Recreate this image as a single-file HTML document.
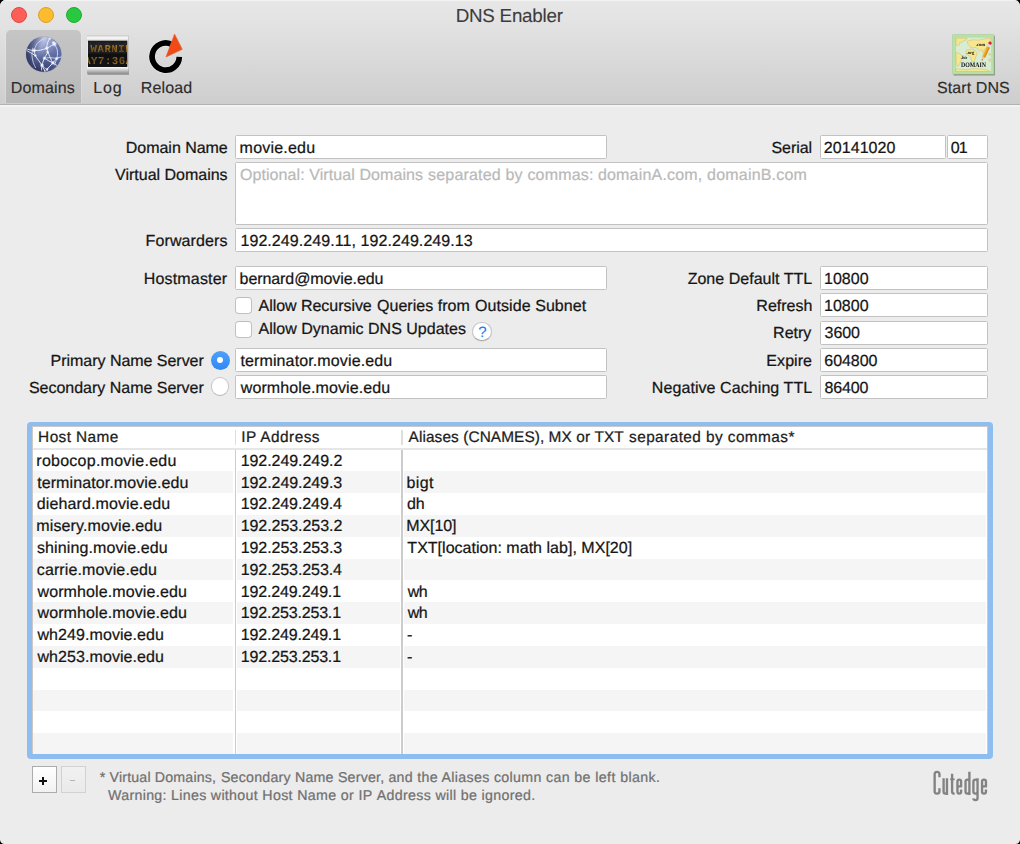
<!DOCTYPE html>
<html><head><meta charset="utf-8"><title>DNS Enabler</title>
<style>
html,body{margin:0;padding:0;}
body{width:1020px;height:844px;background:#000;overflow:hidden;font-family:"Liberation Sans",sans-serif;text-rendering:geometricPrecision;}
#win{position:absolute;left:0;top:0;width:1020px;height:844px;background:#ececec;border-radius:6px 6px 4.5px 4.5px;overflow:hidden;}
#tb{position:absolute;left:0;top:0;width:1020px;height:104px;background:linear-gradient(#e8e7e8 0px,#e4e3e4 22px,#cfcecf 104px);border-bottom:1px solid #b3b2b3;box-shadow:inset 0 1px 0 #f4f3f4, 0 2px 0 #f3f3f3;}
.t{position:absolute;white-space:pre;line-height:20px;height:20px;-webkit-text-stroke:0.24px;}
.abs{position:absolute;}
.inp{position:absolute;background:#fff;border:1px solid #c2c2c2;box-sizing:border-box;border-radius:1.5px;}
.tl{position:absolute;width:16px;height:16px;border-radius:50%;box-sizing:border-box;}
.cb{position:absolute;width:17px;height:17px;box-sizing:border-box;border:1px solid #c1c1c1;border-top-color:#bcbcbc;border-radius:4px;background:#fff;}
.stripe{position:absolute;background:#f5f5f5;height:21.8px;}
</style></head><body><div id="win">
<div id="tb"></div>

<div class="tl" style="left:10.8px;top:6.7px;width:16.4px;height:16.4px;background:#fc5f57;border:1px solid #e2463f;"></div>
<div class="tl" style="left:38.1px;top:6.7px;width:16.4px;height:16.4px;background:#fdbc2e;border:1px solid #dfa023;"></div>
<div class="tl" style="left:65.5px;top:6.7px;width:16.4px;height:16.4px;background:#28c840;border:1px solid #1dad2b;"></div>
<span class="t" style="left:455.65px;top:6.00px;font-size:18.8px;color:#3c3c3c;letter-spacing:-0.231px;-webkit-text-stroke:0.12px;">DNS Enabler</span>
<div class="abs" style="left:5.5px;top:29.5px;width:75px;height:73px;border-radius:5px 5px 0 0;background:linear-gradient(#c6c5c6,#b9b8b9);box-shadow:-1px 0 0 rgba(255,255,255,.18),1px 0 0 rgba(255,255,255,.18);"></div>
<span class="t" style="left:10.87px;top:79.00px;font-size:16px;color:#2b2b2b;letter-spacing:0.112px;-webkit-text-stroke:0.15px;">Domains</span>
<span class="t" style="left:93.37px;top:79.00px;font-size:16px;color:#2b2b2b;letter-spacing:0.775px;-webkit-text-stroke:0.15px;">Log</span>
<span class="t" style="left:140.87px;top:79.00px;font-size:16px;color:#2b2b2b;letter-spacing:0.094px;-webkit-text-stroke:0.15px;">Reload</span>
<span class="t" style="left:937.03px;top:79.00px;font-size:16px;color:#2b2b2b;letter-spacing:0.083px;-webkit-text-stroke:0.15px;">Start DNS</span>
<svg class="abs" style="left:20px;top:30px;" width="50" height="50" viewBox="0 0 50 50">
<defs>
<radialGradient id="gb" cx="0.52" cy="0.12" r="1.0" fx="0.52" fy="0.04">
<stop offset="0" stop-color="#c6ceec"/><stop offset="0.25" stop-color="#99a5d2"/><stop offset="0.5" stop-color="#6675a6"/><stop offset="0.75" stop-color="#3d4875"/><stop offset="1" stop-color="#232a52"/>
</radialGradient>
<linearGradient id="gb2" x1="0" y1="0.2" x2="1" y2="0.6"><stop offset="0" stop-color="#171c3e" stop-opacity="0.62"/><stop offset="0.4" stop-color="#1d2347" stop-opacity="0"/><stop offset="1" stop-color="#6f86d2" stop-opacity="0.45"/></linearGradient>
<radialGradient id="nd"><stop offset="0" stop-color="#fff" stop-opacity="1"/><stop offset="0.3" stop-color="#f2f5ff" stop-opacity="0.9"/><stop offset="1" stop-color="#cfd8ff" stop-opacity="0"/></radialGradient>
<clipPath id="gc"><circle cx="23.67" cy="24.25" r="17.45"/></clipPath>
<filter id="gbl" x="-10%" y="-10%" width="120%" height="120%"><feGaussianBlur stdDeviation="0.42"/></filter>
<filter id="gbs" x="-10%" y="-10%" width="120%" height="120%"><feGaussianBlur stdDeviation="0.5"/></filter>
</defs>
<circle cx="23.67" cy="24.4" r="18.1" fill="#85858f" opacity="0.4" filter="url(#gbs)"/>
<circle cx="23.67" cy="24.25" r="17.6" fill="url(#gb)"/>
<circle cx="23.67" cy="24.25" r="17.6" fill="url(#gb2)"/>
<g clip-path="url(#gc)" fill="none" stroke="#f6f8ff" stroke-width="1.0" stroke-linecap="round" opacity="0.9" filter="url(#gbl)">
<path d="M5.90,18.45 C6.53,18.69 8.30,19.54 9.69,19.88 C11.07,20.22 12.37,20.45 14.19,20.49 C16.01,20.53 18.49,20.49 20.59,20.11 C22.68,19.73 24.93,18.97 26.75,18.22 C28.57,17.47 30.22,16.31 31.49,15.61 C32.75,14.92 33.46,14.64 34.33,14.05 C35.20,13.45 36.31,12.39 36.70,12.06"/><path d="M5.66,20.11 C6.33,20.47 8.07,21.34 9.69,22.25 C11.31,23.15 14.43,25.01 15.37,25.56"/><path d="M14.19,20.49 C14.39,21.34 14.62,23.89 15.37,25.56 C16.12,27.24 17.59,28.92 18.69,30.54 C19.80,32.16 21.14,33.86 22.01,35.28 C22.88,36.70 23.35,37.89 23.91,39.07 C24.46,40.26 25.09,41.84 25.33,42.39"/><path d="M29.83,8.03 C29.43,8.90 27.97,11.54 27.46,13.24 C26.95,14.94 26.71,16.76 26.75,18.22 C26.79,19.68 27.82,20.82 27.70,22.01 C27.58,23.19 26.59,24.30 26.04,25.33 C25.48,26.35 24.89,27.06 24.38,28.17 C23.87,29.28 23.35,30.78 22.96,31.96 C22.56,33.15 22.25,33.94 22.01,35.28 C21.77,36.62 21.61,39.23 21.54,40.02"/><path d="M27.70,22.01 C28.13,22.96 29.43,25.88 30.30,27.70 C31.17,29.51 31.76,31.61 32.91,32.91 C34.06,34.21 36.46,35.08 37.18,35.52"/><path d="M41.91,26.75 C41.05,27.05 38.20,27.52 36.70,28.55 C35.20,29.58 34.49,31.16 32.91,32.91 C31.33,34.66 28.64,37.49 27.22,39.07 C25.80,40.65 24.85,41.84 24.38,42.39"/><path d="M24.38,28.17 C25.09,28.61 27.22,29.99 28.64,30.78 C30.07,31.57 32.20,32.55 32.91,32.91"/><path d="M24.38,28.17 C25.41,28.09 28.49,27.63 30.54,27.70 C32.59,27.76 35.67,28.41 36.70,28.55" opacity="0.8"/><path d="M12.77,18.22 C12.63,19.40 11.88,22.96 11.96,25.33 C12.04,27.70 12.63,30.38 13.24,32.44 C13.85,34.49 15.22,36.78 15.61,37.65" opacity="0.75"/><path d="M14.19,20.49 C14.66,19.36 15.57,15.61 17.03,13.72 C18.49,11.82 21.97,9.88 22.96,9.12" opacity="0.7"/><path d="M34.33,14.05 C34.81,14.98 36.66,17.76 37.18,19.64 C37.69,21.52 37.49,23.84 37.41,25.33 C37.33,26.81 37.14,26.97 36.70,28.55 C36.27,30.13 35.12,33.76 34.81,34.81" opacity="0.8"/><path d="M22.01,35.28 C22.96,36.19 26.75,39.82 27.70,40.73" opacity="0.7"/><path d="M14.19,20.49 C15.10,19.72 18.18,17.74 19.64,15.85 C21.10,13.95 22.40,10.24 22.96,9.12" opacity="0.0"/>
</g>
<g clip-path="url(#gc)"><circle cx="14.19" cy="20.49" r="2.6" fill="url(#nd)"/><circle cx="26.75" cy="18.22" r="2.4" fill="url(#nd)"/><circle cx="34.33" cy="14.05" r="3.0" fill="url(#nd)"/><circle cx="29.83" cy="8.27" r="2.0" fill="url(#nd)"/><circle cx="27.70" cy="22.01" r="2.0" fill="url(#nd)"/><circle cx="24.38" cy="28.17" r="2.2" fill="url(#nd)"/><circle cx="22.01" cy="35.28" r="2.6" fill="url(#nd)"/><circle cx="32.91" cy="32.91" r="2.4" fill="url(#nd)"/><circle cx="36.70" cy="28.55" r="2.2" fill="url(#nd)"/><circle cx="15.37" cy="25.56" r="1.8" fill="url(#nd)"/><circle cx="27.22" cy="39.07" r="1.8" fill="url(#nd)"/><circle cx="33.38" cy="12.53" r="2.0" fill="url(#nd)"/></g>
</svg><svg class="abs" style="left:82px;top:30px;" width="50" height="50" viewBox="0 0 50 50">
<defs>
<linearGradient id="lt" x1="0" y1="0" x2="0" y2="1"><stop offset="0" stop-color="#c9c9c9"/><stop offset="0.5" stop-color="#fbfbfb"/><stop offset="1" stop-color="#cfcfcf"/></linearGradient>
<linearGradient id="lb" x1="0" y1="0" x2="0" y2="1"><stop offset="0" stop-color="#ffffff"/><stop offset="0.5" stop-color="#c9c9c9"/><stop offset="1" stop-color="#8e8e8e"/></linearGradient>
<linearGradient id="ls" x1="0" y1="0" x2="0" y2="1"><stop offset="0" stop-color="#101010"/><stop offset="0.08" stop-color="#2a2a2a"/><stop offset="0.47" stop-color="#232323"/><stop offset="0.5" stop-color="#0d0d0d"/><stop offset="1" stop-color="#141414"/></linearGradient>
<clipPath id="lc"><rect x="6" y="10.7" width="39.3" height="26.3"/></clipPath>
<filter id="lbl"><feGaussianBlur stdDeviation="0.3"/></filter>
<filter id="lsh"><feGaussianBlur stdDeviation="0.7"/></filter>
<pattern id="lp" width="1.12" height="1.12" patternUnits="userSpaceOnUse"><path d="M0,0.15 H1.12 M0.15,0 V1.12" stroke="#151515" stroke-width="0.34" fill="none"/></pattern>
</defs>
<rect x="5.6" y="6" width="41.4" height="39" fill="#000" opacity="0.25" filter="url(#lsh)"/>
<rect x="5" y="5" width="41.5" height="6" fill="url(#lt)"/>
<rect x="5" y="36.8" width="41.5" height="6.8" fill="url(#lb)"/>
<rect x="5" y="10.7" width="41.5" height="26.3" fill="#e8e8e8"/>
<rect x="6" y="10.7" width="39.3" height="26.3" fill="url(#ls)"/>
<g clip-path="url(#lc)" font-family="'Liberation Mono',monospace" font-weight="bold" font-size="10.6" fill="#cc8f2b" opacity="0.92" filter="url(#lbl)" letter-spacing="0.55">
<text x="8.6" y="21.9">WARNING</text>
<text x="2.2" y="34.1">AY7:36AM</text>
</g>
<rect x="6" y="12" width="39.3" height="24" fill="url(#lp)" opacity="0.8"/>
</svg><svg class="abs" style="left:140px;top:28px;" width="52" height="52" viewBox="0 0 52 52">
<defs><filter id="rsh" x="-20%" y="-20%" width="140%" height="140%"><feGaussianBlur stdDeviation="0.5"/></filter></defs>
<path d="M39.2,28.9 A13.6,13.6 0 1 1 31.3,16.3" fill="none" stroke="#fff" stroke-width="6.6" opacity="0.55" filter="url(#rsh)"/>
<path d="M39.3,28.9 A13.6,13.6 0 1 1 31.3,16.2" fill="none" stroke="#000" stroke-width="5.7"/>
<path d="M34.8,6.3 L26.1,29.2 L42.6,21.6 Z" fill="#555" opacity="0.5" filter="url(#rsh)"/>
<path d="M34.5,5.9 L25.9,29 L42.2,21.3 Z" fill="#f04a16" stroke="#f36a3c" stroke-width="0.5" stroke-linejoin="round"/>
</svg><svg class="abs" style="left:948px;top:30px;" width="50" height="50" viewBox="0 0 50 50">
<defs><filter id="ssh" x="-20%" y="-20%" width="140%" height="140%"><feGaussianBlur stdDeviation="0.7"/></filter>
<filter id="sbl"><feGaussianBlur stdDeviation="0.3"/></filter>
<linearGradient id="pb" x1="0" y1="0" x2="1" y2="0"><stop offset="0" stop-color="#f7c24a"/><stop offset="0.5" stop-color="#f0a21e"/><stop offset="1" stop-color="#c97c10"/></linearGradient>
</defs>
<rect x="5.6" y="5.8" width="41.2" height="39.6" fill="#000" opacity="0.4" filter="url(#ssh)"/>
<rect x="4.7" y="4.7" width="41.2" height="39.4" fill="#b9e2a6"/>
<rect x="4.7" y="4.7" width="41.2" height="39.4" fill="none" stroke="#a5cf93" stroke-width="0.6"/>
<rect x="7.7" y="7.1" width="36.1" height="34.4" fill="#d7ecd2" stroke="#a9cf9a" stroke-width="0.5"/>
<g fill="#f5e68f" stroke="#c9b866" stroke-width="0.45" stroke-linejoin="round" filter="url(#sbl)"><polygon points="8.0,8.3 19.0,8.3 18.1,10.1 15.1,11.0 13.9,12.7 12.1,11.8 11.3,14.8 8.3,15.5"/><polygon points="19.5,11.0 24.9,9.8 30.8,10.2 35.5,8.9 42.4,8.3 42.8,10.7 40.6,13.6 38.8,17.2 36.4,19.5 35.1,22.8 33.5,19.5 31.5,20.9 29.7,19.5 28.0,17.3 25.6,17.9 22.6,17.3 20.3,14.8 19.5,12.6"/><polygon points="18.4,20.1 23.7,19.1 27.8,20.7 29.1,23.7 27.8,26.7 26.1,32.0 23.8,31.4 22.5,26.8 19.5,24.9 17.8,22.5"/><polygon points="8.2,22.4 11.8,23.6 14.3,26.7 13.2,30.8 10.8,35.5 8.9,36.3 8.2,29.6"/><polygon points="8.2,38.8 17.8,39.8 26.7,38.6 35.5,39.2 41.0,40.4 41.0,41.6 8.2,41.6"/><polygon points="40.9,23.4 42.2,23.7 42.2,25.2 41.0,25.0"/><polygon points="40.9,28.9 42.4,29.1 42.3,31.5 41.0,31.3"/></g>
<g font-family="'Liberation Serif',serif" fill="#111" filter="url(#sbl)">
<text x="13" y="37" font-size="6.9" font-weight="bold" textLength="25" lengthAdjust="spacingAndGlyphs">DOMAIN</text>
<text x="27.8" y="15.6" font-size="4.6" font-weight="bold">.com</text>
<text x="18.6" y="23.6" font-size="4.6" font-weight="bold">.org</text>
<text x="12.8" y="28.9" font-size="4.6" font-weight="bold" font-style="italic">.biz</text>
</g>
<g transform="translate(33.8,30.8) rotate(25)">
<polygon points="0,0 -1.7,-4.2 1.7,-4.2" fill="#e8c9a0"/>
<polygon points="0,0 -0.6,-1.5 0.6,-1.5" fill="#7a3b3b"/>
<rect x="-1.7" y="-15.6" width="3.4" height="11.5" fill="url(#pb)"/>
<rect x="-1.7" y="-18.4" width="3.4" height="2.9" fill="#d9dde6"/>
<rect x="-1.7" y="-21" width="3.4" height="2.8" rx="1.3" fill="#e32038"/>
</g>
</svg>
<div class="inp" style="left:235px;top:134.5px;width:372px;height:24.5px;"></div>
<div class="inp" style="left:820px;top:134.5px;width:126px;height:24.5px;"></div>
<div class="inp" style="left:947px;top:134.5px;width:41px;height:24.5px;"></div>
<div class="inp" style="left:235px;top:162px;width:753px;height:63px;"></div>
<div class="inp" style="left:235px;top:227.5px;width:753px;height:24.5px;"></div>
<div class="inp" style="left:235px;top:265.5px;width:372px;height:24.5px;"></div>
<div class="inp" style="left:820px;top:265.5px;width:168px;height:24.5px;"></div>
<div class="inp" style="left:820px;top:293.2px;width:168px;height:24.30000000000001px;"></div>
<div class="inp" style="left:820px;top:320.5px;width:168px;height:24.5px;"></div>
<div class="inp" style="left:235px;top:347.7px;width:372px;height:24.30000000000001px;"></div>
<div class="inp" style="left:820px;top:347.7px;width:168px;height:24.30000000000001px;"></div>
<div class="inp" style="left:235px;top:375.2px;width:372px;height:24.30000000000001px;"></div>
<div class="inp" style="left:820px;top:375.2px;width:168px;height:24.30000000000001px;"></div>
<span class="t" style="left:125.87px;top:139.00px;font-size:16px;color:#151515;letter-spacing:-0.042px;">Domain Name</span>
<span class="t" style="left:115.07px;top:166.00px;font-size:16px;color:#151515;letter-spacing:-0.007px;">Virtual Domains</span>
<span class="t" style="left:145.62px;top:232.00px;font-size:16px;color:#151515;letter-spacing:0.101px;">Forwarders</span>
<span class="t" style="left:143.87px;top:270.00px;font-size:16px;color:#151515;letter-spacing:0.153px;">Hostmaster</span>
<span class="t" style="left:50.62px;top:352.00px;font-size:16px;color:#151515;letter-spacing:-0.034px;">Primary Name Server</span>
<span class="t" style="left:28.93px;top:379.00px;font-size:16px;color:#151515;letter-spacing:-0.015px;">Secondary Name Server</span>
<span class="t" style="left:771.43px;top:139.00px;font-size:16px;color:#151515;letter-spacing:-0.034px;">Serial</span>
<span class="t" style="left:687.67px;top:270.00px;font-size:16px;color:#151515;letter-spacing:0.020px;">Zone Default TTL</span>
<span class="t" style="left:756.37px;top:297.00px;font-size:16px;color:#151515;letter-spacing:-0.010px;">Refresh</span>
<span class="t" style="left:773.12px;top:324.00px;font-size:16px;color:#151515;">Retry</span>
<span class="t" style="left:766.37px;top:352.00px;font-size:16px;color:#151515;letter-spacing:0.052px;">Expire</span>
<span class="t" style="left:651.87px;top:379.00px;font-size:16px;color:#151515;letter-spacing:0.073px;">Negative Caching TTL</span>
<span class="t" style="left:239.61px;top:139.00px;font-size:16px;color:#151515;letter-spacing:0.211px;">movie.edu</span>
<span class="t" style="left:823.85px;top:139.00px;font-size:16px;color:#151515;letter-spacing:0.051px;">20141020</span>
<span class="t" style="left:950.84px;top:139.00px;font-size:16px;color:#151515;letter-spacing:-1.030px;">01</span>
<span class="t" style="left:239.93px;top:166.00px;font-size:16px;color:#b9b9b9;letter-spacing:0.084px;">Optional: Virtual Domains</span><span class="t" style="left:428.05px;top:166.00px;font-size:16px;color:#b9b9b9;letter-spacing:0.185px;">separated by commas:</span><span class="t" style="left:597.91px;top:166.00px;font-size:16px;color:#b9b9b9;letter-spacing:0.192px;">domainA.com, domainB.com</span>
<span class="t" style="left:240.45px;top:232.00px;font-size:16px;color:#151515;letter-spacing:0.073px;">192.249.249.11, 192.249.249.13</span>
<span class="t" style="left:239.61px;top:270.00px;font-size:16px;color:#151515;letter-spacing:-0.089px;">bernard@movie.edu</span>
<span class="t" style="left:258.55px;top:297.00px;font-size:16px;color:#151515;letter-spacing:-0.044px;">Allow Recursive</span><span class="t" style="left:377.03px;top:297.00px;font-size:16px;color:#151515;letter-spacing:0.025px;">Queries from</span><span class="t" style="left:474.93px;top:297.00px;font-size:16px;color:#151515;letter-spacing:0.078px;">Outside Subnet</span>
<span class="t" style="left:258.55px;top:320.00px;font-size:16px;color:#151515;letter-spacing:0.007px;">Allow Dynamic DNS Updates</span>
<span class="t" style="left:240.41px;top:352.00px;font-size:16px;color:#151515;letter-spacing:0.125px;">terminator.movie.edu</span>
<span class="t" style="left:240.73px;top:379.00px;font-size:16px;color:#151515;letter-spacing:0.106px;">wormhole.movie.edu</span>
<span class="t" style="left:823.95px;top:270.00px;font-size:16px;color:#151515;letter-spacing:0.058px;">10800</span>
<span class="t" style="left:823.95px;top:297.00px;font-size:16px;color:#151515;letter-spacing:0.058px;">10800</span>
<span class="t" style="left:824.59px;top:324.00px;font-size:16px;color:#151515;letter-spacing:-0.093px;">3600</span>
<span class="t" style="left:824.35px;top:352.00px;font-size:16px;color:#151515;letter-spacing:-0.060px;">604800</span>
<span class="t" style="left:824.51px;top:379.00px;font-size:16px;color:#151515;letter-spacing:-0.145px;">86400</span>
<div class="cb" style="left:234.6px;top:297.4px;"></div>
<div class="cb" style="left:234.6px;top:320.8px;"></div>
<div class="abs" style="left:472px;top:321.5px;width:19.5px;height:19.5px;border-radius:50%;background:#fff;box-sizing:border-box;border:1px solid #c6c6c6;border-bottom-color:#aaa;box-shadow:0 0.5px 0.5px rgba(0,0,0,.12);"></div>
<span class="t" style="left:478.25px;top:323.00px;font-size:15px;color:#1a7cf9;-webkit-text-stroke:0.1px;">?</span>
<div class="abs" style="left:210.5px;top:351px;width:19px;height:19px;border-radius:50%;background:linear-gradient(#4fa1f9,#3088f5);"></div>
<div class="abs" style="left:216.9px;top:357.3px;width:6.2px;height:6.2px;border-radius:50%;background:#fff;"></div>
<div class="abs" style="left:210.6px;top:376.9px;width:18.8px;height:18.8px;border-radius:50%;background:#fff;box-sizing:border-box;border:1px solid #c6c6c6;border-bottom-color:#b4b4b4;"></div>
<div class="abs" style="left:27.3px;top:422px;width:965.3px;height:336.6px;border-radius:4px;background:#8ebdf0;"></div>
<div class="abs" style="left:31.6px;top:426.2px;width:956.6px;height:328.2px;background:#cdc8c4;"></div>
<div class="abs" id="tbl" style="left:32.5px;top:426.8px;width:954.8px;height:326.9px;background:#fff;overflow:hidden;">
<div class="stripe" style="left:0;top:44.62px;width:953.8px;"></div>
<div class="stripe" style="left:0;top:88.26px;width:953.8px;"></div>
<div class="stripe" style="left:0;top:131.90px;width:953.8px;"></div>
<div class="stripe" style="left:0;top:175.54px;width:953.8px;"></div>
<div class="stripe" style="left:0;top:219.18px;width:953.8px;"></div>
<div class="stripe" style="left:0;top:262.82px;width:953.8px;"></div>
<div class="stripe" style="left:0;top:306.46px;width:953.8px;"></div>
<div class="abs" style="left:200.80px;top:22.80px;width:4px;height:320px;background:#fff;"></div>
<div class="abs" style="left:202.25px;top:22.40px;width:1.5px;height:320px;background:#cccccc;"></div>
<div class="abs" style="left:202.25px;top:3.70px;width:1.5px;height:14.5px;background:#dedede;"></div>
<div class="abs" style="left:367.50px;top:22.80px;width:4px;height:320px;background:#fff;"></div>
<div class="abs" style="left:368.95px;top:22.40px;width:1.5px;height:320px;background:#cccccc;"></div>
<div class="abs" style="left:368.95px;top:3.70px;width:1.5px;height:14.5px;background:#dedede;"></div>
<div class="abs" style="left:0;top:21.30px;width:955px;height:1.6px;background:#e6e6e6;"></div>
</div>
<span class="t" style="left:38.12px;top:428.00px;font-size:15.4px;color:#1c1c1c;letter-spacing:0.406px;">Host Name</span>
<span class="t" style="left:241.26px;top:428.00px;font-size:15.4px;color:#1c1c1c;letter-spacing:0.461px;">IP Address</span>
<span class="t" style="left:408.55px;top:428.00px;font-size:15.4px;color:#1c1c1c;letter-spacing:0.095px;">Aliases (CNAMES),</span><span class="t" style="left:548.62px;top:428.00px;font-size:15.4px;color:#1c1c1c;letter-spacing:0.124px;">MX or TXT</span><span class="t" style="left:629.06px;top:428.00px;font-size:15.4px;color:#1c1c1c;letter-spacing:0.420px;">separated by commas*</span>
<span class="t" style="left:36.36px;top:452.00px;font-size:16px;color:#151515;letter-spacing:0.247px;">robocop.movie.edu</span>
<span class="t" style="left:240.70px;top:452.00px;font-size:16px;color:#151515;letter-spacing:-0.058px;">192.249.249.2</span>
<span class="t" style="left:37.16px;top:474.00px;font-size:16px;color:#151515;letter-spacing:0.098px;">terminator.movie.edu</span>
<span class="t" style="left:240.70px;top:474.00px;font-size:16px;color:#151515;letter-spacing:-0.065px;">192.249.249.3</span>
<span class="t" style="left:406.61px;top:474.00px;font-size:16px;color:#151515;letter-spacing:0.353px;">bigt</span>
<span class="t" style="left:36.76px;top:495.00px;font-size:16px;color:#151515;letter-spacing:0.111px;">diehard.movie.edu</span>
<span class="t" style="left:240.70px;top:495.00px;font-size:16px;color:#151515;letter-spacing:-0.085px;">192.249.249.4</span>
<span class="t" style="left:407.01px;top:495.00px;font-size:16px;color:#151515;letter-spacing:-0.210px;">dh</span>
<span class="t" style="left:36.36px;top:517.00px;font-size:16px;color:#151515;letter-spacing:0.108px;">misery.movie.edu</span>
<span class="t" style="left:240.70px;top:517.00px;font-size:16px;color:#151515;letter-spacing:-0.058px;">192.253.253.2</span>
<span class="t" style="left:406.37px;top:517.00px;font-size:16px;color:#151515;letter-spacing:-0.124px;">MX[10]</span>
<span class="t" style="left:37.00px;top:539.00px;font-size:16px;color:#151515;letter-spacing:0.105px;">shining.movie.edu</span>
<span class="t" style="left:240.70px;top:539.00px;font-size:16px;color:#151515;letter-spacing:-0.065px;">192.253.253.3</span>
<span class="t" style="left:407.33px;top:539.00px;font-size:16px;color:#151515;letter-spacing:0.024px;">TXT[location: math lab], MX[20]</span>
<span class="t" style="left:36.76px;top:561.00px;font-size:16px;color:#151515;letter-spacing:0.126px;">carrie.movie.edu</span>
<span class="t" style="left:240.70px;top:561.00px;font-size:16px;color:#151515;letter-spacing:-0.085px;">192.253.253.4</span>
<span class="t" style="left:37.48px;top:583.00px;font-size:16px;color:#151515;letter-spacing:0.106px;">wormhole.movie.edu</span>
<span class="t" style="left:240.70px;top:583.00px;font-size:16px;color:#151515;letter-spacing:-0.163px;">192.249.249.1</span>
<span class="t" style="left:407.73px;top:583.00px;font-size:16px;color:#151515;letter-spacing:-0.570px;">wh</span>
<span class="t" style="left:37.48px;top:604.00px;font-size:16px;color:#151515;letter-spacing:0.106px;">wormhole.movie.edu</span>
<span class="t" style="left:240.70px;top:604.00px;font-size:16px;color:#151515;letter-spacing:-0.163px;">192.253.253.1</span>
<span class="t" style="left:407.73px;top:604.00px;font-size:16px;color:#151515;letter-spacing:-0.570px;">wh</span>
<span class="t" style="left:37.48px;top:626.00px;font-size:16px;color:#151515;letter-spacing:0.075px;">wh249.movie.edu</span>
<span class="t" style="left:240.70px;top:626.00px;font-size:16px;color:#151515;letter-spacing:-0.163px;">192.249.249.1</span>
<span class="t" style="left:406.93px;top:626.00px;font-size:16px;color:#151515;">-</span>
<span class="t" style="left:37.48px;top:648.00px;font-size:16px;color:#151515;letter-spacing:0.075px;">wh253.movie.edu</span>
<span class="t" style="left:240.70px;top:648.00px;font-size:16px;color:#151515;letter-spacing:-0.163px;">192.253.253.1</span>
<span class="t" style="left:406.93px;top:648.00px;font-size:16px;color:#151515;">-</span>
<div class="abs" style="left:32px;top:766px;width:25px;height:27px;box-sizing:border-box;border:1px solid #acacac;background:linear-gradient(#fff,#f2f2f2);"></div>
<div class="abs" style="left:38.8px;top:780.3px;width:8.6px;height:1.5px;background:#111;"></div>
<div class="abs" style="left:42.35px;top:776.8px;width:1.5px;height:8.6px;background:#111;"></div>
<div class="abs" style="left:60.5px;top:766px;width:25.5px;height:27px;box-sizing:border-box;border:1px solid #d2d2d2;background:linear-gradient(#f1f1f1,#eaeaea);"></div>
<div class="abs" style="left:70px;top:780px;width:5px;height:1.4px;background:#b4b4b4;"></div>
<span class="t" style="left:99.74px;top:768.00px;font-size:14.2px;color:#707070;letter-spacing:0.177px;">* Virtual Domains,</span><span class="t" style="left:220.91px;top:768.00px;font-size:14.2px;color:#707070;letter-spacing:0.230px;">Secondary Name Server,</span><span class="t" style="left:388.38px;top:768.00px;font-size:14.2px;color:#707070;letter-spacing:0.337px;">and the Aliases column</span><span class="t" style="left:545.88px;top:768.00px;font-size:14.2px;color:#707070;letter-spacing:0.407px;">can be left blank.</span>
<span class="t" style="left:108.08px;top:786.00px;font-size:14.2px;color:#707070;letter-spacing:0.313px;">Warning: Lines without</span><span class="t" style="left:262.31px;top:786.00px;font-size:14.2px;color:#707070;letter-spacing:0.358px;">Host Name or IP</span><span class="t" style="left:376.65px;top:786.00px;font-size:14.2px;color:#707070;letter-spacing:0.347px;">Address will be ignored.</span>
<svg class="abs" style="left:920px;top:760px;" width="80" height="50" viewBox="0 0 80 50">
<g fill="none" stroke="#838383" stroke-width="2.35" stroke-linejoin="round"><path d="M19.45,17.2 V14.2 Q19.45,11.85 17.05,11.85 Q14.65,11.85 14.65,14.2 V31.3 Q14.65,33.65 17.05,33.65 Q19.45,33.65 19.45,31.3 V28.3"/><path d="M23.6,18.3 V31.6 Q23.6,33.65 25.3,33.65 Q26.95,33.65 26.95,31.6 M26.95,18.3 V34.9"/><path d="M32.1,13.7 V31.7 Q32.1,33.65 34.6,33.65"/><path d="M41.1,29.6 V31.6 Q41.1,33.65 39.275000000000006,33.65 Q37.45,33.65 37.45,31.6 V21.6 Q37.45,19.55 39.275000000000006,19.55 Q41.1,19.55 41.1,21.6 V26.4 H37.45"/><path d="M49.4,11.8 V34.9 M49.4,21.6 Q49.4,19.55 47.5,19.55 Q45.55,19.55 45.55,21.6 V31.6 Q45.55,33.65 47.5,33.65 Q49.4,33.65 49.4,31.6"/><path d="M57.55,18.3 V38 Q57.55,40.1 55.5,40.1 Q53.5,40.1 53.3,38.4 M57.55,21.6 Q57.55,19.55 55.5,19.55 Q53.4,19.55 53.4,21.6 V31.6 Q53.4,33.65 55.5,33.65 Q57.55,33.65 57.55,31.6"/><path d="M65.95,29.6 V31.6 Q65.95,33.65 64.0,33.65 Q62.05,33.65 62.05,31.6 V21.6 Q62.05,19.55 64.0,19.55 Q65.95,19.55 65.95,21.6 V26.4 H62.05"/>
<path d="M30.2,19.3 H34.6" stroke-width="1.9"/></g></svg>
</div></body></html>
